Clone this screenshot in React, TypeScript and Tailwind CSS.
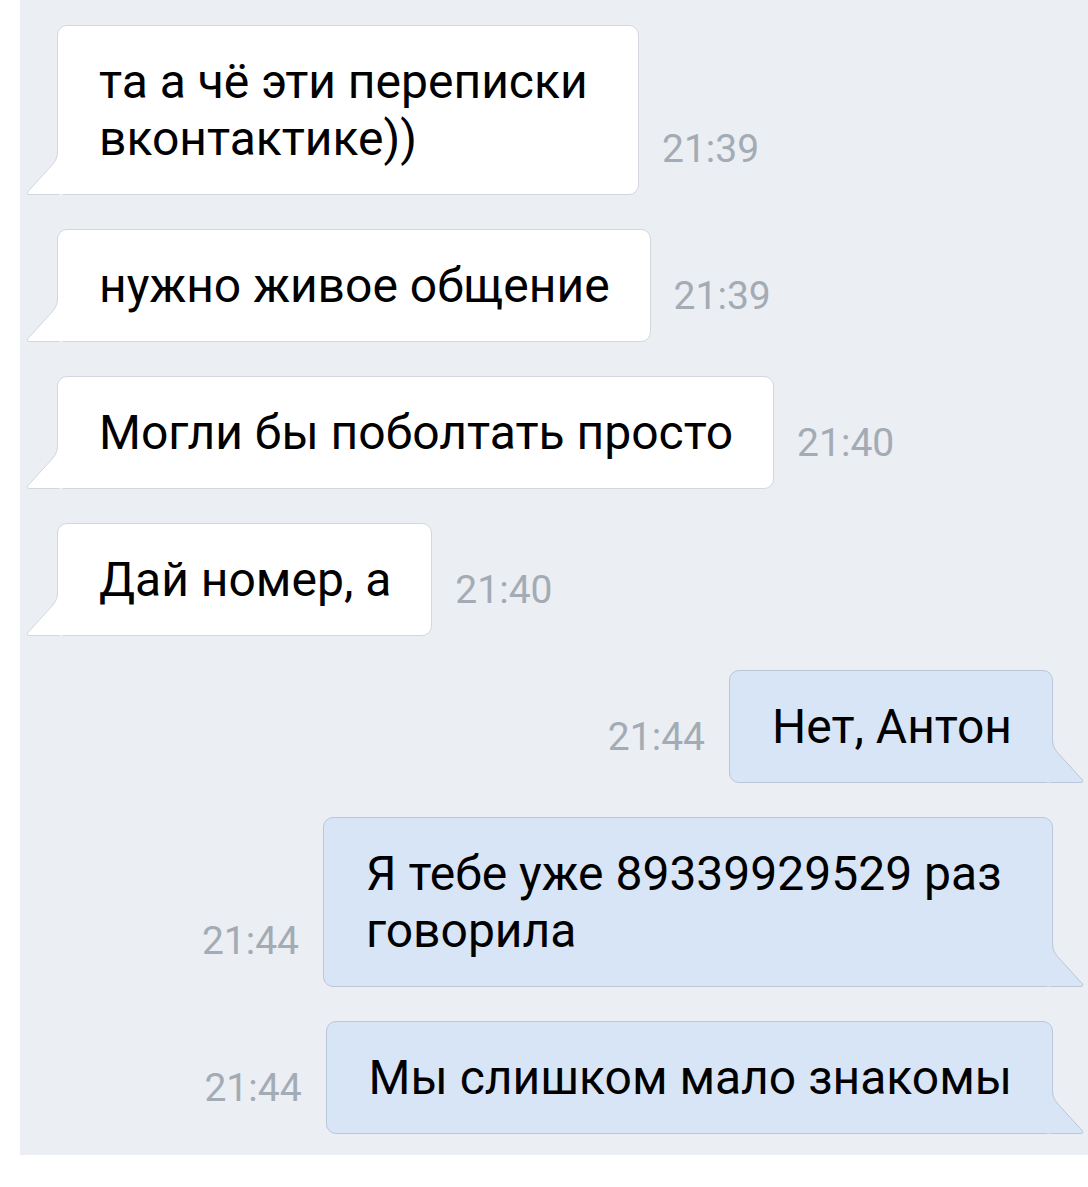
import React from "react";

const font = { fontFamily: "Roboto, 'Noto Sans', sans-serif" };

function TailLeft() {
  return (
    <svg
      className="absolute bottom-[-1px] left-[-33px]"
      width="38"
      height="50"
      viewBox="0 0 38 50"
    >
      <path
        d="M32.5 0 L32.5 6 C32.5 12 31 15 28 19 L2.5 47 Q1.5 49.5 4 49.5 L38 49.5 L38 0 Z"
        fill="#ffffff"
      />
      <path
        d="M32.5 0 L32.5 6 C32.5 12 31 15 28 19 L2.5 47 Q1.5 49.5 4 49.5 L34 49.5"
        fill="none"
        stroke="#d3d7dd"
        strokeWidth="1"
      />
    </svg>
  );
}

function TailRight() {
  return (
    <svg
      className="absolute bottom-[-1px] right-[-33px]"
      width="38"
      height="50"
      viewBox="0 0 38 50"
    >
      <path
        d="M5.5 0 L5.5 6 C5.5 12 7 15 10 19 L35.5 47 Q36.5 49.5 34 49.5 L0 49.5 L0 0 Z"
        fill="#d8e5f7"
      />
      <path
        d="M5.5 0 L5.5 6 C5.5 12 7 15 10 19 L35.5 47 Q36.5 49.5 34 49.5 L4 49.5"
        fill="none"
        stroke="#bac7d8"
        strokeWidth="1"
      />
    </svg>
  );
}

function Time({ t }: { t: string }) {
  return (
    <div className="mb-[25px] text-[39px] leading-[42px] text-[#a3abb5]" style={font}>
      {t}
    </div>
  );
}

function Incoming({ children, time, w }: { children: React.ReactNode; time: string; w?: string }) {
  return (
    <div className="flex items-end gap-[23px] pl-[37px]">
      <div
        className={`relative rounded-[10px] rounded-bl-none border border-[#d3d7dd] bg-white py-[27px] pl-[41px] pr-[40px] text-[48px] leading-[57px] text-black ${w ?? ""}`}
        style={font}
      >
        {children}
        <TailLeft />
      </div>
      <Time t={time} />
    </div>
  );
}

function Outgoing({ children, time, w }: { children: React.ReactNode; time: string; w?: string }) {
  return (
    <div className="flex items-end justify-end gap-[24px] pr-[35px]">
      <Time t={time} />
      <div
        className={`relative rounded-[10px] rounded-br-none border border-[#bac7d8] bg-[#d8e5f7] py-[27px] pl-[42px] pr-[40px] text-[48px] leading-[57px] text-black ${w ?? ""}`}
        style={font}
      >
        {children}
        <TailRight />
      </div>
    </div>
  );
}

export default function App() {
  return (
    <div className="h-[1187px] w-[1088px] overflow-hidden bg-white">
      <div className="ml-[20px] flex h-[1155px] flex-col gap-[34px] bg-[#ebeef3] pt-[25px]">
        <Incoming time="21:39" w="w-[582px]">
          та а чё эти переписки
          <br />
          вконтактике))
        </Incoming>
        <Incoming time="21:39">нужно живое общение</Incoming>
        <Incoming time="21:40">Могли бы поболтать просто</Incoming>
        <Incoming time="21:40">Дай номер, а</Incoming>
        <Outgoing time="21:44">Нет, Антон</Outgoing>
        <Outgoing time="21:44" w="w-[730px]">
          Я тебе уже 89339929529 раз
          <br />
          говорила
        </Outgoing>
        <Outgoing time="21:44">Мы слишком мало знакомы</Outgoing>
      </div>
    </div>
  );
}
